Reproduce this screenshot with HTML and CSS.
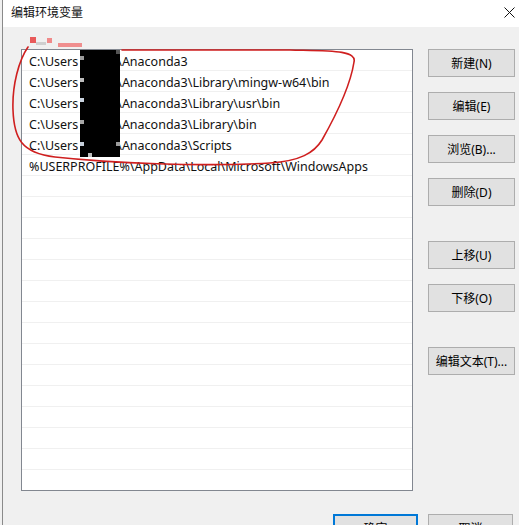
FILE: index.html
```html
<!DOCTYPE html>
<html lang="zh-CN">
<head>
<meta charset="utf-8">
<title>编辑环境变量</title>
<link rel="stylesheet" href="styles.css">
</head>
<body>
<div class="window">
  <div class="titlebar">
    <span class="title">编辑环境变量</span>
    <svg class="close" width="11" height="11" viewBox="0 0 11 11"><path d="M0.5 0.5 L10.5 10.5 M10.5 0.5 L0.5 10.5" stroke="#111" stroke-width="1" fill="none"/></svg>
  </div>
  <div class="content">
    <div class="main">
      <div class="list">
        <div class="row">C:\Users<span class="hid"></span>\Anaconda3</div>
        <div class="row">C:\Users<span class="hid"></span>\Anaconda3\Library\mingw-w64\bin</div>
        <div class="row">C:\Users<span class="hid"></span>\Anaconda3\Library\usr\bin</div>
        <div class="row">C:\Users<span class="hid"></span>\Anaconda3\Library\bin</div>
        <div class="row">C:\Users<span class="hid"></span>\Anaconda3\Scripts</div>
        <div class="row">%USERPROFILE%\AppData\Local\Microsoft\WindowsApps</div>
        <div class="row"></div><div class="row"></div><div class="row"></div><div class="row"></div>
        <div class="row"></div><div class="row"></div><div class="row"></div><div class="row"></div>
        <div class="row"></div><div class="row"></div><div class="row"></div><div class="row"></div>
        <div class="row"></div><div class="row"></div><div class="row"></div>
      </div>
      <div class="side">
        <button class="btn">新建(N)</button>
        <button class="btn">编辑(E)</button>
        <button class="btn">浏览(B)...</button>
        <button class="btn">删除(D)</button>
        <button class="btn gap-a">上移(U)</button>
        <button class="btn">下移(O)</button>
        <button class="btn gap-b">编辑文本(T)...</button>
      </div>
    </div>
    <div class="footer">
      <button class="btn default">确定</button>
      <button class="btn">取消</button>
    </div>
  </div>
  <div class="redact">
    <span class="px p1"></span><span class="px p2"></span><span class="px p3"></span>
    <span class="px p4"></span><span class="px p5"></span><span class="px p6"></span>
    <span class="px p7"></span><span class="px p8"></span>
  </div>
  <div class="blobs">
    <span class="b b1"></span><span class="b b2"></span><span class="b b3"></span><span class="b b4"></span>
  </div>
  <svg class="annot" width="519" height="525" viewBox="0 0 519 525">
    <path d="M28 47 C19 60 12 85 13 110 C14 138 21 153 55 157 C110 163 200 167 270 163 C300 161 314 153 322 140 C335 117 350 88 354 62 C357 50 330 51 290 50 L122 50" stroke="#cf1f1f" stroke-width="1.6" fill="none" stroke-linecap="round"/>
  </svg>
</div>
</body>
</html>
```

FILE: styles.css
```css
html, body {
  margin: 0;
  padding: 0;
  width: 519px;
  height: 525px;
  overflow: hidden;
  background: #f0f0f0;
}

.window {
  position: relative;
  margin-left: 2px;
  width: 517px;
  height: 525px;
  border-left: 1px solid #8a8a8a;
  box-sizing: border-box;
  background: #f0f0f0;
  font-family: "Noto Sans", "Noto Sans CJK SC", sans-serif;
  font-size: 12px;
  color: #000;
}

.titlebar {
  height: 27px;
  background: #ffffff;
  display: flex;
  align-items: center;
  justify-content: space-between;
  padding: 0 4px 0 8px;
}

.title {
  font-family: "Noto Sans CJK SC", sans-serif;
  font-size: 12px;
  color: #111;
  line-height: 22px;
  margin-top: -3px;
}

.close {
  display: block;
  margin-top: -3px;
}

.content {
  padding: 22px 4px 0 18px;
}

.main {
  display: flex;
  gap: 15px;
}

.list {
  width: 392px;
  height: 442px;
  box-sizing: border-box;
  border: 1px solid #828790;
  background: #ffffff;
  overflow: hidden;
}

.row {
  height: 18px;
  padding-top: 2px;
  line-height: 20px;
  border-bottom: 1px solid #f0f0f0;
  padding-left: 7px;
  white-space: nowrap;
  font-size: 12.5px;
  color: #111;
}

.hid {
  display: inline-block;
  width: 39px;
}

.side {
  width: 87px;
  display: flex;
  flex-direction: column;
  gap: 15px;
}

.btn {
  height: 28px;
  box-sizing: border-box;
  border: 1px solid #adadad;
  background: #e1e1e1;
  font-family: "Noto Sans", "Noto Sans CJK SC", sans-serif;
  font-size: 12px;
  color: #000;
  padding: 0;
  margin: 0;
}

.side .btn {
  width: 87px;
}

.gap-a {
  margin-top: 20px;
}

.gap-b {
  margin-top: 20px;
}

.footer {
  display: flex;
  justify-content: flex-end;
  gap: 10px;
  margin-top: 23px;
  padding-right: 2px;
}

.footer .btn {
  width: 85px;
}

.btn.default {
  border: 2px solid #0078d7;
}

/* redaction overlay */
.redact {
  position: absolute;
  left: 77px;
  top: 50px;
  width: 40px;
  height: 107px;
  background: #000;
}

.px {
  position: absolute;
  width: 4px;
  height: 4px;
}
.p1 { left: 0; top: 6px; background: #9a9a9a; }
.p2 { left: 0; top: 28px; background: #bcbcbc; }
.p3 { left: 0; top: 48px; background: #c9d3df; }
.p4 { left: 0; top: 70px; background: #a8a8a8; }
.p5 { left: 0; top: 92px; background: #c6cfdb; }
.p6 { left: 36px; top: 0; background: #555; }
.p7 { left: 36px; top: 92px; background: #9b9b9b; }
.p8 { left: 8px; top: 103px; background: #bdbdbd; }

/* little red pixel blobs */
.blobs {
  position: absolute;
  left: 0;
  top: 0;
}
.b { position: absolute; }
.b1 { left: 27px; top: 37px; width: 6px; height: 6px; background: #e85a5a; }
.b2 { left: 44px; top: 38px; width: 5px; height: 5px; background: #f08a8a; }
.b3 { left: 55px; top: 43px; width: 24px; height: 4px; background: #ef8e8e; }
.b4 { left: 33px; top: 42px; width: 10px; height: 3px; background: #cfcfcf; }

.annot {
  position: absolute;
  left: -3px;
  top: 0;
  pointer-events: none;
}
```
